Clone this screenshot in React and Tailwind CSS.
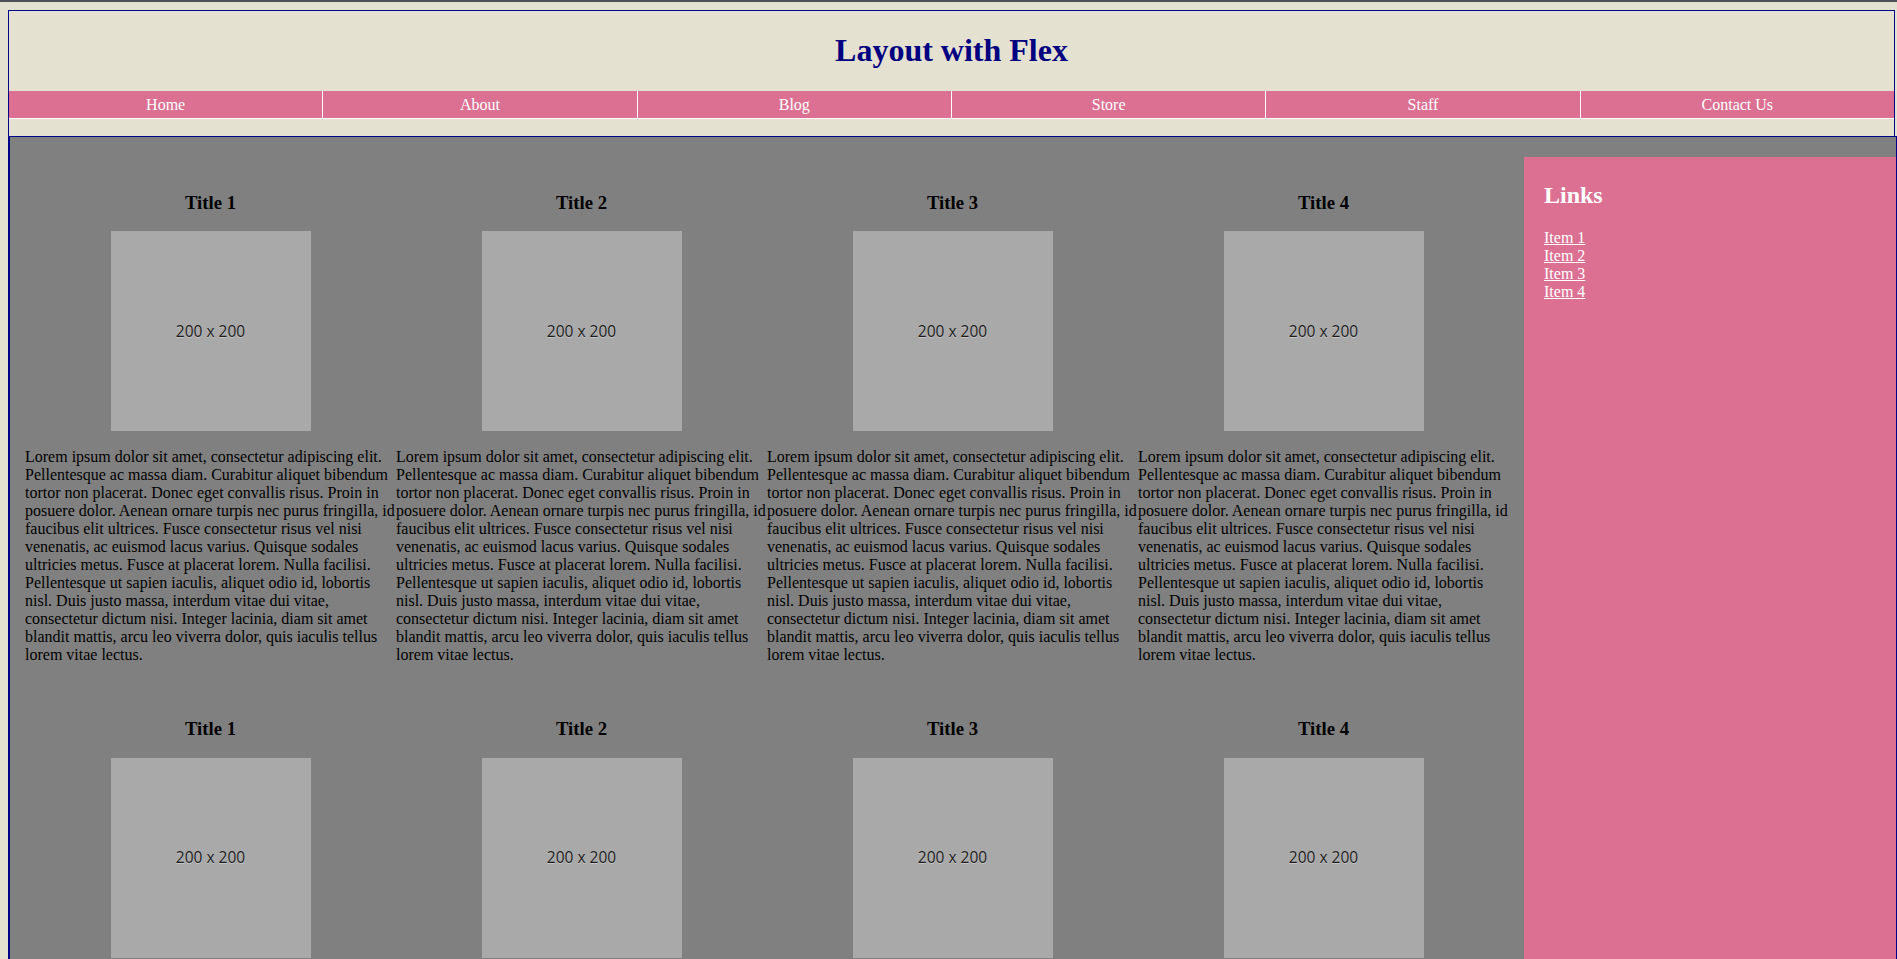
import React from 'react';

const navItems = ['Home', 'About', 'Blog', 'Store', 'Staff', 'Contact Us'];
const titles = ['Title 1', 'Title 2', 'Title 3', 'Title 4'];

const lorem =
  'Lorem ipsum dolor sit amet, consectetur adipiscing elit. Pellentesque ac massa diam. Curabitur aliquet bibendum tortor non placerat. Donec eget convallis risus. Proin in posuere dolor. Aenean ornare turpis nec purus fringilla, id faucibus elit ultrices. Fusce consectetur risus vel nisi venenatis, ac euismod lacus varius. Quisque sodales ultricies metus. Fusce at placerat lorem. Nulla facilisi. Pellentesque ut sapien iaculis, aliquet odio id, lobortis nisl. Duis justo massa, interdum vitae dui vitae, consectetur dictum nisi. Integer lacinia, diam sit amet blandit mattis, arcu leo viverra dolor, quis iaculis tellus lorem vitae lectus.';

const Card = ({ title }) => (
  <div className="w-[371px] py-[10px]">
    <h3 className="mt-[18.72px] mb-[18.72px] text-center text-[18.72px] leading-[21px] font-bold text-black">
      {title}
    </h3>
    <div className="mx-auto flex h-[200px] w-[200px] items-center justify-center bg-[#a9a9a9]">
      <span className="text-[15.5px] text-[#1c1c1c] [font-family:'Open_Sans',sans-serif] [text-shadow:0_1px_0_rgba(255,255,255,0.35)]">
        200 x 200
      </span>
    </div>
    <p className="mt-[17px] mb-[15px] w-[372px] text-[16px] leading-[18px] text-black">{lorem}</p>
  </div>
);

const App = () => {
  return (
    <div className="min-h-screen bg-[#e4e1d1] [font-family:'Liberation_Serif','Times_New_Roman',serif]">
      <div className="h-[2px] bg-[#4b4f56]" />
      <div className="ml-[8px] mt-[8px] w-[1887px] border-l border-t border-r border-[#00008b]">
        {/* Header */}
        <h1 className="mt-[21.44px] mb-[21.44px] text-center text-[32px] leading-[37px] font-bold text-[#000080]">
          Layout with Flex
        </h1>
        <nav className="flex border-b border-white bg-[#db7093]">
          {navItems.map((item, idx) => (
            <a
              key={item}
              className={`flex h-[27px] flex-1 items-center justify-center pt-[1px] text-[16px] text-white ${
                idx < navItems.length - 1 ? 'border-r border-white' : ''
              }`}
            >
              {item}
            </a>
          ))}
        </nav>
        <div className="h-[17px]" />

        {/* Main */}
        <main className="flex w-[1888px] border border-[#00008b] bg-[#808080]">
          <section className="flex flex-1 flex-wrap px-[15px] pt-[26px]">
            {titles.map((t) => (
              <Card key={`a-${t}`} title={t} />
            ))}
            {titles.map((t) => (
              <Card key={`b-${t}`} title={t} />
            ))}
          </section>

          <aside className="mt-[20px] w-[372px] self-stretch bg-[#db7093] px-[20px] pt-[5px]">
            <h2 className="mt-[19.92px] mb-[19.92px] text-[24px] leading-[27px] font-bold text-white">Links</h2>
            <div className="flex flex-col items-start text-[16px] leading-[18px]">
              {['Item 1', 'Item 2', 'Item 3', 'Item 4'].map((i) => (
                <a key={i} href="#" className="text-white underline">
                  {i}
                </a>
              ))}
            </div>
          </aside>
        </main>
      </div>
    </div>
  );
};

export default App;
